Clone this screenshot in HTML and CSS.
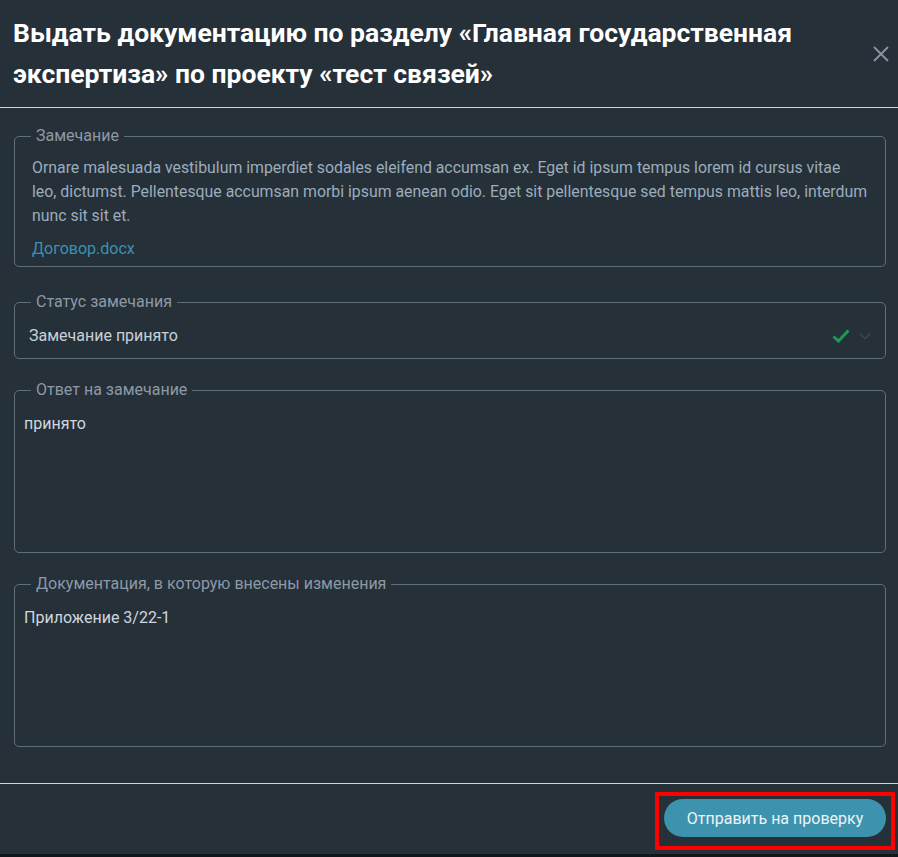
FILE: index.html
```html
<!DOCTYPE html>
<html lang="ru">
<head>
<meta charset="utf-8">
<title>Выдать документацию</title>
<link rel="stylesheet" href="styles.css">
</head>
<body>
<div class="dialog">
  <header class="header">
    <h1 class="title">Выдать документацию по разделу «Главная государственная экспертиза» по проекту «тест связей»</h1>
    <button class="close" aria-label="Закрыть">
      <svg width="16" height="16" viewBox="0 0 16 16"><path d="M1 1L15 15M15 1L1 15" stroke="#8b959f" stroke-width="1.8" fill="none"/></svg>
    </button>
  </header>
  <main class="body">
    <fieldset class="field field-first">
      <legend class="legend">Замечание</legend>
      <div class="remark">
        <p class="remark-text">Ornare malesuada vestibulum imperdiet sodales eleifend accumsan ex. Eget id ipsum tempus lorem id cursus vitae<br>leo, dictumst. Pellentesque accumsan morbi ipsum aenean odio. Eget sit pellentesque sed tempus mattis leo, interdum<br>nunc sit sit et.</p>
        <a class="file-link" href="#">Договор.docx</a>
      </div>
    </fieldset>
    <fieldset class="field">
      <legend class="legend">Статус замечания</legend>
      <div class="select">
        <span class="select-value">Замечание принято</span>
        <svg class="check" width="18" height="14" viewBox="0 0 18 14"><path d="M1.5 7.5L6.5 12L16.5 1.5" stroke="#1f9a55" stroke-width="3" fill="none"/></svg>
        <svg class="chevron" width="12" height="8" viewBox="0 0 12 8"><path d="M1 1.5L6 6.5L11 1.5" stroke="#3a4652" stroke-width="1.5" fill="none"/></svg>
      </div>
    </fieldset>
    <fieldset class="field">
      <legend class="legend">Ответ на замечание</legend>
      <div class="textarea">принято</div>
    </fieldset>
    <fieldset class="field">
      <legend class="legend">Документация, в которую внесены изменения</legend>
      <div class="textarea">Приложение 3/22-1</div>
    </fieldset>
  </main>
  <footer class="footer">
    <div class="highlight">
      <button class="submit">Отправить на проверку</button>
    </div>
  </footer>
  <div class="bottom-strip"></div>
</div>
</body>
</html>
```

FILE: styles.css
```css
* { box-sizing: border-box; }

html, body {
  margin: 0;
  padding: 0;
  background: #263039;
}

body {
  font-family: Roboto, "Noto Sans", sans-serif;
  width: 898px;
  height: 857px;
  overflow: hidden;
}

.dialog {
  width: 898px;
  display: flex;
  flex-direction: column;
}

.header {
  display: flex;
  align-items: center;
  justify-content: space-between;
  padding: 12px 9px 13px 13px;
  border-bottom: 1px solid #cfd5db;
}

.title {
  margin: 0;
  width: 810px;
  font-size: 26.5px;
  line-height: 41px;
  font-weight: 700;
  color: #ffffff;
}

.close {
  background: none;
  border: 0;
  padding: 0;
  width: 16px;
  height: 16px;
  display: flex;
  margin-top: 1px;
}

.body {
  display: flex;
  flex-direction: column;
  gap: 22px;
  padding: 19px 12px 36px 14px;
}

.field {
  margin: 0;
  padding: 0;
  border: 1px solid #5f6e7b;
  border-radius: 5px;
  min-width: 0;
}

.field-first {
  margin-bottom: 4px;
}

.legend {
  margin-left: 16px;
  padding: 0 5px;
  font-size: 16px;
  line-height: 18px;
  color: #8d99a5;
}

.remark {
  padding: 11px 8px 5px 17px;
}

.remark-text {
  margin: 0;
  font-size: 15.85px;
  line-height: 24px;
  color: #9badbb;
}

.file-link {
  display: block;
  margin-top: 9px;
  font-size: 16px;
  line-height: 24px;
  color: #3a90b2;
  text-decoration: none;
}

.select {
  display: flex;
  align-items: center;
  padding: 13px 14px 10px 14px;
  height: 47px;
}

.select-value {
  flex: 1;
  font-size: 16px;
  line-height: 24px;
  font-weight: 400;
  color: #c8d0d7;
}

.check {
  margin-right: 9px;
}

.chevron {
  margin-right: 0;
}

.textarea {
  height: 153px;
  padding: 13px 9px 12px;
  font-size: 16px;
  line-height: 24px;
  font-weight: 400;
  color: #d0d7dd;
}

.footer {
  display: flex;
  justify-content: flex-end;
  border-top: 1px solid #cfd5db;
  padding: 8px 3px 4px 0;
}

.highlight {
  border: 4px solid #ff0000;
  padding: 3px 5px 9px 5px;
}

.submit {
  width: 222px;
  height: 38px;
  border: 0;
  border-radius: 19px;
  background: #3d93ae;
  color: #eef4f7;
  font-family: Roboto, "Noto Sans", sans-serif;
  font-size: 16px;
  font-weight: 400;
}

.bottom-strip {
  height: 3px;
  background: #12161a;
}
```
